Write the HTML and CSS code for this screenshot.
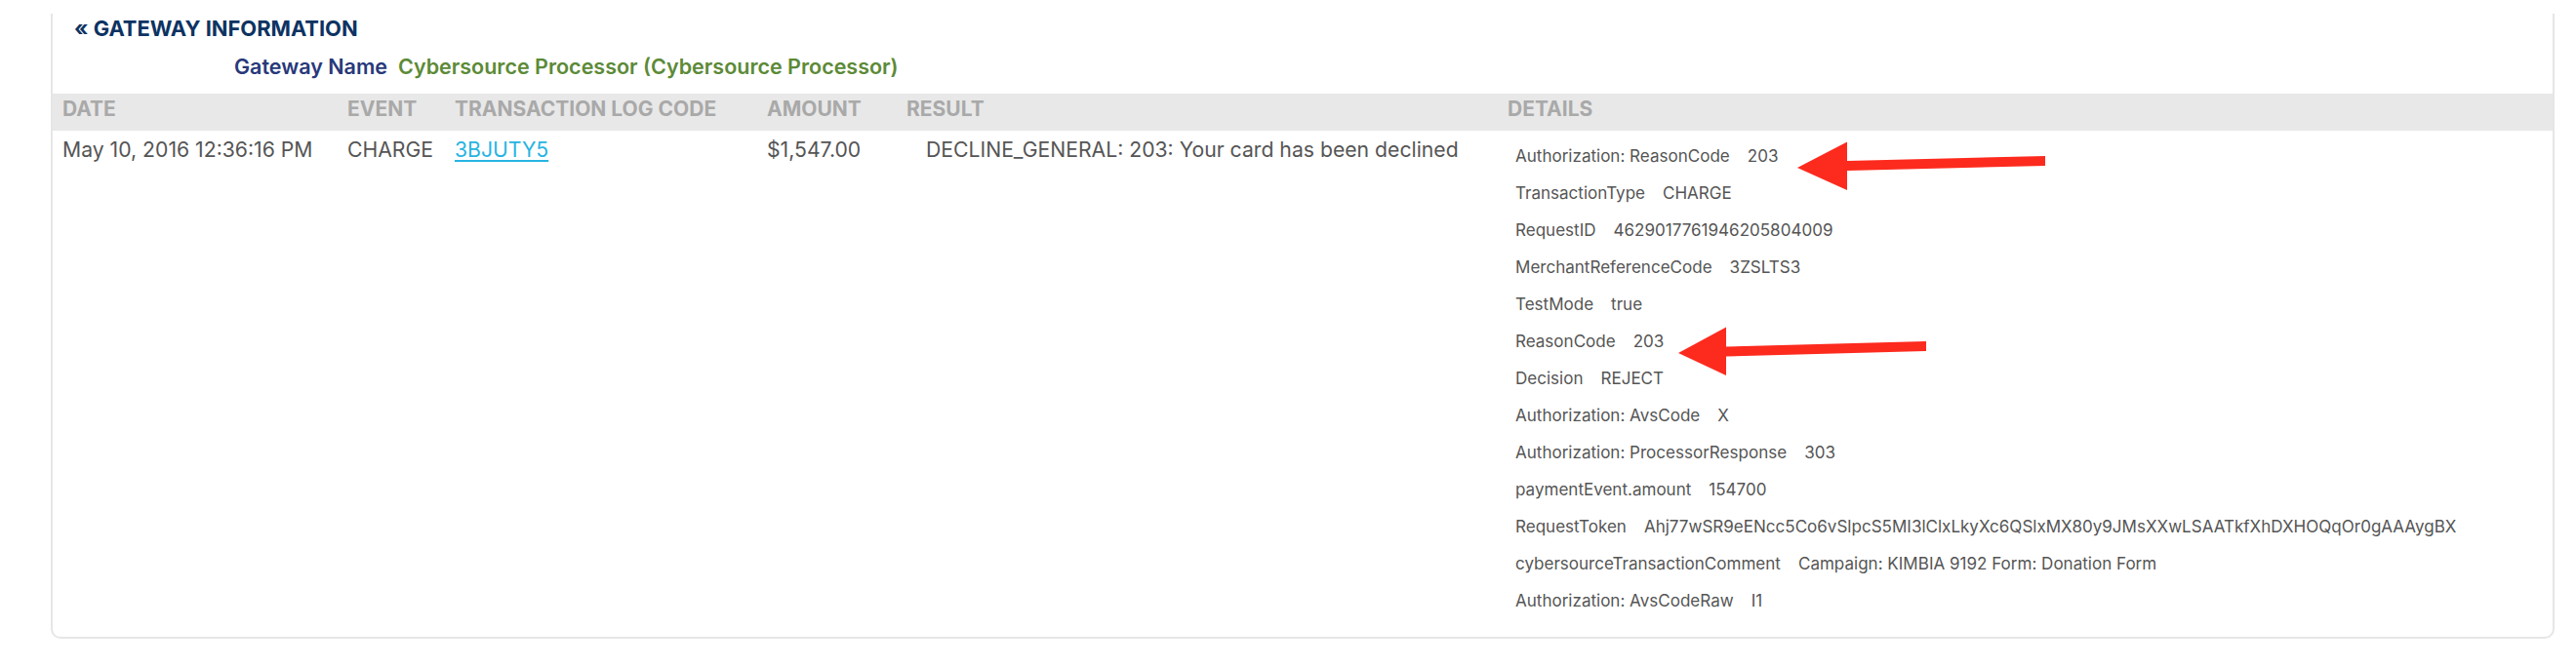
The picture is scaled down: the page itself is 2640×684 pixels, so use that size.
FILE: index.html
```html
<!DOCTYPE html>
<html lang="en">
<head>
  <meta charset="UTF-8">
  <title>Gateway information</title>
  <link rel="stylesheet" href="styles.css">
</head>
<body>
<div class="page">
  <div class="panel">
    <h2 class="panel_title">&laquo; GATEWAY INFORMATION</h2>
    <div class="gateway">
      <span class="gateway_label">Gateway Name</span>
      <span class="gateway_value">Cybersource Processor (Cybersource Processor)</span>
    </div>
    <table class="log">
      <colgroup>
        <col class="col_date">
        <col class="col_event">
        <col class="col_code">
        <col class="col_amount">
        <col class="col_result">
        <col>
      </colgroup>
      <thead>
        <tr>
          <th>DATE</th>
          <th>EVENT</th>
          <th>TRANSACTION LOG CODE</th>
          <th>AMOUNT</th>
          <th>RESULT</th>
          <th>DETAILS</th>
        </tr>
      </thead>
      <tbody>
        <tr>
          <td>May 10, 2016 12:36:16 PM</td>
          <td>CHARGE</td>
          <td><a href="#" class="code">3BJUTY5</a></td>
          <td>$1,547.00</td>
          <td><span class="result">DECLINE_GENERAL: 203: Your card has been declined</span></td>
          <td>
            <ul class="details">
              <li><span>Authorization: ReasonCode</span><span>203</span></li>
              <li><span>TransactionType</span><span>CHARGE</span></li>
              <li><span>RequestID</span><span>4629017761946205804009</span></li>
              <li><span>MerchantReferenceCode</span><span>3ZSLTS3</span></li>
              <li><span>TestMode</span><span>true</span></li>
              <li><span>ReasonCode</span><span>203</span></li>
              <li><span>Decision</span><span>REJECT</span></li>
              <li><span>Authorization: AvsCode</span><span>X</span></li>
              <li><span>Authorization: ProcessorResponse</span><span>303</span></li>
              <li><span>paymentEvent.amount</span><span>154700</span></li>
              <li><span>RequestToken</span><span>Ahj77wSR9eENcc5Co6vSlpcS5MI3lClxLkyXc6QSlxMX80y9JMsXXwLSAATkfXhDXHOQqOr0gAAAygBX</span></li>
              <li><span>cybersourceTransactionComment</span><span>Campaign: KIMBIA 9192 Form: Donation Form</span></li>
              <li><span>Authorization: AvsCodeRaw</span><span>I1</span></li>
            </ul>
          </td>
        </tr>
      </tbody>
    </table>
  </div>

  <!-- red arrows pointing at the two reason codes -->
  <svg class="marks" width="2640" height="684" viewBox="0 0 2640 684">
    <polygon points="1842,158 1893,131.5 1893,151 2096,146 2096,156 1893,161 1893,181"/>
    <polygon points="1720,348 1769,321.5 1769,341.5 1974,336 1974,346 1769,351.5 1769,371"/>
  </svg>
</div>
</body>
</html>
```

FILE: styles.css
```css
body {
  margin: 0;
  background: #ffffff;
  font-family: Inter, Lato, sans-serif;
  color: #555555;
}

.page {
  position: relative;
  padding: 0 22px 0 52px;
}

.panel {
  border: 2px solid #e6e6e6;
  border-top: 0;
  border-radius: 0 0 10px 10px;
  padding-bottom: 18px;
  background: #ffffff;
}

.panel_title {
  margin: 14px 0 0;
  padding-left: 22px;
  font-size: 21.9px;
  line-height: 30px;
  font-weight: 700;
  color: #0d3362;
}

.gateway {
  display: grid;
  grid-template-columns: 343px auto;
  column-gap: 11px;
  margin-top: 9px;
  font-size: 21.5px;
  line-height: 30px;
  font-weight: 600;
}

.gateway_label {
  text-align: right;
  color: #28387a;
}

.gateway_value {
  color: #5c8a37;
}

.log {
  width: 100%;
  margin-top: 13px;
  border-collapse: collapse;
  table-layout: fixed;
}

.col_date {
  width: 292px;
}

.col_event {
  width: 110px;
}

.col_code {
  width: 320px;
}

.col_amount {
  width: 143px;
}

.col_result {
  width: 616px;
}

.log th {
  padding: 0 10px 6px;
  background: #e8e8e8;
  text-align: left;
  font-size: 21px;
  line-height: 32px;
  font-weight: 700;
  color: #a9a9a9;
  white-space: nowrap;
}

.log td {
  padding: 6px 10px 0;
  vertical-align: top;
  font-size: 21.2px;
  line-height: 26px;
  white-space: nowrap;
}

.code {
  color: #27b4e2;
  text-decoration: underline;
  text-decoration-thickness: 2px;
  text-underline-offset: 3px;
}

.result {
  padding-left: 20px;
}

.details {
  margin: 0;
  padding: 1px 0 0 8px;
  list-style: none;
}

.details li {
  display: flex;
  gap: 18px;
  font-size: 17.05px;
  line-height: 38px;
}

.marks {
  position: absolute;
  top: 0;
  left: 0;
  pointer-events: none;
}

.marks polygon {
  fill: #fd2a1e;
}
```
